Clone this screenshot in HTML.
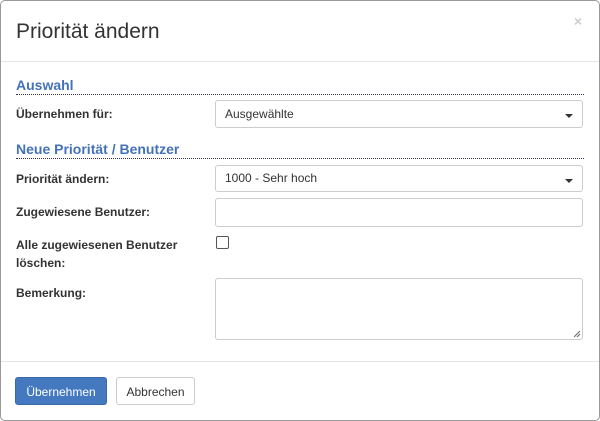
<!DOCTYPE html><html><head><style>
body{margin:0;width:600px;height:421px;background:#fff;font-family:"Liberation Sans",sans-serif;color:#333;position:relative;overflow:hidden}
.box{position:absolute;left:0;top:0;width:598px;height:419px;border:1px solid #999;border-radius:5px}
.a{position:absolute}
.t{font-size:21px;left:16px;top:20px;color:#333}
.x{right:18px;top:13px;color:#ccc;font-size:14px;font-weight:bold}
.hl{left:1px;right:1px;height:1px;background:#e5e5e5}
.sec{left:16px;right:16px;color:#4472b8;font-weight:bold;font-size:14px;border-bottom:1px dotted #335;padding-bottom:1px}
.lb{left:16px;font-size:12px;font-weight:bold;color:#333;line-height:18px}
.in{left:215px;width:368px;border:1px solid #ccc;border-radius:3px;font-size:12px;color:#333;box-sizing:border-box;padding-left:9px}
.car{position:absolute;right:9px;top:13px;border:4px solid transparent;border-top:4px solid #333;border-bottom:0}
.btn{font-size:12px;border-radius:3px;height:28px;line-height:28px;text-align:center;box-sizing:border-box}
</style></head><body>
<div class="box"></div>
<div class="a t">Priorität ändern</div>
<div class="a x">×</div>
<div class="a hl" style="top:61px"></div>
<div class="a sec" style="top:77px">Auswahl</div>
<div class="a lb" style="top:105px">Übernehmen für:</div>
<div class="a in" style="top:100px;height:28px;line-height:26px">Ausgewählte<span class="car"></span></div>
<div class="a sec" style="top:141px">Neue Priorität / Benutzer</div>
<div class="a lb" style="top:170px">Priorität ändern:</div>
<div class="a in" style="top:165px;height:27px;line-height:25px">1000 - Sehr hoch<span class="car"></span></div>
<div class="a lb" style="top:203px">Zugewiesene Benutzer:</div>
<div class="a in" style="top:198px;height:29px"></div>
<div class="a lb" style="top:236px">Alle zugewiesenen Benutzer<br>löschen:</div>
<div class="a" style="left:216px;top:236px;width:11px;height:11px;border:1px solid #555;border-radius:2px"></div>
<div class="a lb" style="top:284px">Bemerkung:</div>
<div class="a in" style="top:278px;height:62px"><svg style="position:absolute;right:1px;bottom:1px" width="8" height="8"><path d="M1 7L7 1M4 7L7 4" stroke="#666" stroke-width="1"/></svg></div>
<div class="a hl" style="top:361px"></div>
<div class="a btn" style="left:15px;top:377px;width:92px;background:#4479c0;color:#fff;border:1px solid #3a69a8">Übernehmen</div>
<div class="a btn" style="left:116px;top:377px;width:79px;background:#fff;color:#333;border:1px solid #ccc">Abbrechen</div>
</body></html>
